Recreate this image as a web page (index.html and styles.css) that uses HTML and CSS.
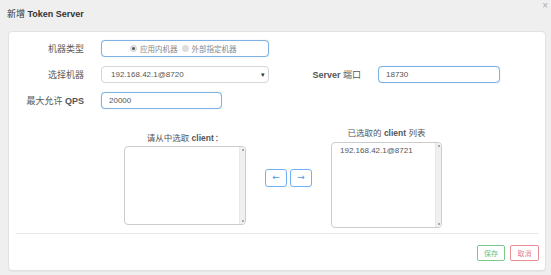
FILE: index.html
```html
<!DOCTYPE html>
<html lang="zh">
<head>
<meta charset="utf-8">
<link rel="stylesheet" href="styles.css">
</head>
<body>
<div class="modal">
  <div class="modal-header">
    <div class="title">新增 <b>Token Server</b></div>
    <span class="close">×</span>
  </div>
  <div class="card">
    <div class="form-grid">
      <div class="label">机器类型</div>
      <div class="field radio-box focus">
        <span class="radio checked"></span><span class="radio-text">应用内机器</span>
        <span class="radio"></span><span class="radio-text">外部指定机器</span>
      </div>
      <div class="blank"></div>
      <div class="blank"></div>

      <div class="label">选择机器</div>
      <div class="field select">
        <span class="val">192.168.42.1@8720</span>
        <span class="caret">▾</span>
      </div>
      <div class="label"><span><b>Server</b> 端口</span></div>
      <div class="field input focus"><span class="val">18730</span></div>

      <div class="label"><span>最大允许 <b>QPS</b></span></div>
      <div class="field input focus short"><span class="val">20000</span></div>
      <div class="blank"></div>
      <div class="blank"></div>
    </div>

    <div class="transfer">
      <div class="col col-left">
        <div class="col-title">请从中选取 <b>client</b><span class="cjk">：</span></div>
        <div class="listbox lb-left">
          <div class="items"></div>
          <div class="scroll"><span class="up"></span><span class="grip"></span></div>
        </div>
      </div>
      <div class="moves">
        <button class="mv">←</button>
        <button class="mv">→</button>
      </div>
      <div class="col col-right">
        <div class="col-title">已选取的 <b>client</b> 列表</div>
        <div class="listbox lb-right">
          <div class="items"><div class="item">192.168.42.1@8721</div></div>
          <div class="scroll"><span class="up"></span><span class="grip"></span></div>
        </div>
      </div>
    </div>

    <div class="divider"></div>

    <div class="footer">
      <button class="btn save">保存</button>
      <button class="btn cancel">取消</button>
    </div>
  </div>
</div>
</body>
</html>
```

FILE: styles.css
```css
* { box-sizing: border-box; }
html, body {
  margin: 0;
  padding: 0;
  background: #efefef;
  width: 551px;
  height: 275px;
  overflow: hidden;
  font-family: "Liberation Sans", "Noto Sans CJK SC", sans-serif;
  color: #555;
}
b { font-weight: bold; }
.cjk { font-family: "Noto Sans CJK SC", sans-serif; padding-left: 1px; }

.modal { padding: 0 5px 4px 8px; }

.modal-header {
  height: 31px;
  display: flex;
  align-items: center;
  justify-content: space-between;
  padding-bottom: 4px;
}
.title {
  font-size: 9px;
  color: #333;
  margin-left: -1px;
}
.close {
  font-size: 10px;
  color: #aaa;
  line-height: 1;
  margin-top: -15px;
  margin-right: -2px;
}

.card {
  background: #fff;
  border: 1px solid #e2e2e2;
  border-radius: 4px;
  height: 240px;
  padding: 8px 0 0 0;
  box-shadow: 0 1px 1px rgba(0,0,0,0.04);
}

.form-grid {
  display: grid;
  grid-template-columns: 92px 168px 109px 122px;
  grid-auto-rows: 17px;
  row-gap: 9px;
}
.label {
  font-size: 9px;
  color: #5a5a5a;
  text-align: right;
  display: flex;
  align-items: center;
  justify-content: flex-end;
  padding-right: 17px;
  white-space: nowrap;
}
.label b { color: #555; }

.field {
  height: 17px;
  border: 1px solid #ccc;
  border-radius: 4px;
  display: flex;
  align-items: center;
  font-size: 8px;
  color: #555;
  background: #fff;
}
.field.focus {
  border-color: #7fb2e3;
  box-shadow: 0 0 1px rgba(102,175,233,0.6);
}
.field.short { width: 121px; }
.input .val { padding-left: 7px; }
.select { justify-content: space-between; padding: 0 3px 0 9px; border-color: #d6d6d6; }
.caret { font-size: 7px; color: #333; }

.radio-box {
  justify-content: flex-start;
  padding-left: 28px;
  font-size: 7.5px;
  color: #888;
}
.radio {
  width: 7px;
  height: 7px;
  border-radius: 50%;
  background: #ddd;
  margin-right: 3px;
  position: relative;
}
.radio.checked { background: #e6e6e6; border: 1px solid #cfcfcf; }
.radio.checked::after {
  content: "";
  position: absolute;
  left: 1px; top: 1px;
  width: 3px; height: 3px;
  border-radius: 50%;
  background: #555;
}
.radio-text { margin-right: 4px; }

.transfer {
  display: flex;
  align-items: center;
  margin-top: 18px;
  padding-left: 115px;
  height: 101px;
}
.col { display: flex; flex-direction: column; align-items: center; }
.col-title {
  font-size: 8.5px;
  color: #555;
  height: 12px;
  line-height: 12px;
  margin-bottom: 3px;
}
.listbox {
  border: 1px solid #ccc;
  border-radius: 4px;
  display: flex;
  background: #fff;
  overflow: hidden;
}
.lb-left { width: 122px; height: 79px; }
.lb-right { width: 111px; height: 86px; }
.items { flex: 1; padding: 3px 0 0 8px; }
.item { font-size: 8px; color: #555; }
.scroll {
  width: 6px;
  background: #f0f0f0;
  border-left: 1px solid #e8e8e8;
  display: flex;
  flex-direction: column;
  justify-content: space-between;
  align-items: center;
  padding: 2px 0;
}
.scroll .up, .scroll .grip {
  width: 2px; height: 2px; background: #aaa;
}

.moves {
  display: flex;
  gap: 3px;
  margin: 0 19px;
}
.mv {
  width: 22px;
  height: 18px;
  padding: 0 0 1px 0;
  border: 1.5px solid #70b1f5;
  border-radius: 3px;
  background: #fff;
  color: #4a97e6;
  font-family: "DejaVu Sans", sans-serif;
  font-size: 9px;
  line-height: 1;
}

.divider {
  height: 1px;
  background: #e6e6e6;
  margin: 5px 7px 0 7px;
}

.footer {
  display: flex;
  justify-content: flex-end;
  gap: 5px;
  margin-top: 11px;
  padding-right: 6px;
}
.btn {
  height: 16px;
  padding: 0;
  border-radius: 2px;
  background: #fff;
  font-family: "Noto Sans CJK SC", sans-serif;
  font-size: 7px;
  line-height: 1;
}
.save { width: 28px; border: 1px solid #7cc98a; color: #6cbf7a; }
.cancel { width: 29px; border: 1px solid #eb8f97; color: #e57f89; }
```
